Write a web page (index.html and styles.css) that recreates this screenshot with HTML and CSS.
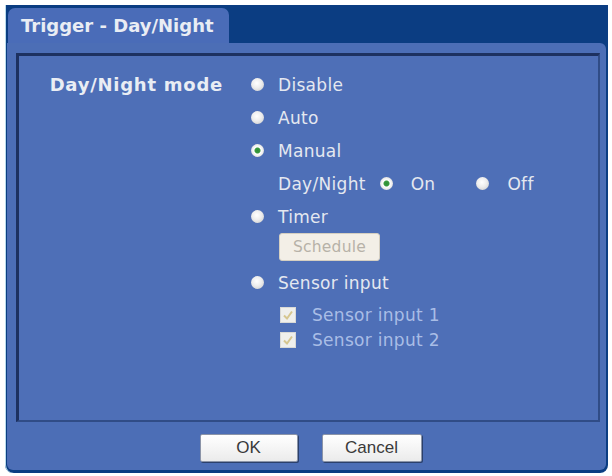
FILE: index.html
```html
<!DOCTYPE html>
<html lang="en">
<head>
    <meta charset="UTF-8">
    <meta name="viewport" content="width=device-width, initial-scale=1.0">
    <title>Trigger - Day/Night</title>
    <link rel="stylesheet" href="styles.css">
</head>
<body>
    <div class="dialog">
        <div class="dialog-head">
            <div class="tab">Trigger - Day/Night</div>
        </div>

        <div class="dialog-body">
            <div class="panel">
                <div class="field">
                    <div class="field-label">Day/Night mode</div>
                    <div class="options">
                        <label class="option"><span class="radio"></span>Disable</label>
                        <label class="option"><span class="radio"></span>Auto</label>
                        <label class="option"><span class="radio checked"></span>Manual</label>

                        <!-- manual switch -->
                        <div class="sub-row">
                            <span>Day/Night</span>
                            <span class="radio checked on-radio"></span>
                            <span class="sub-text">On</span>
                            <span class="radio off-radio"></span>
                            <span class="sub-text">Off</span>
                        </div>

                        <label class="option"><span class="radio"></span>Timer</label>
                        <div class="indent">
                            <button class="btn-small" disabled>Schedule</button>
                        </div>

                        <label class="option"><span class="radio"></span>Sensor input</label>
                        <div class="checks">
                            <label class="check">
                                <span class="box"><svg width="12" height="12" viewBox="0 0 12 12"><polyline points="2,6.5 5,9.5 10,2.5" fill="none" stroke="#d6c68f" stroke-width="2"/></svg></span>
                                Sensor input 1
                            </label>
                            <label class="check">
                                <span class="box"><svg width="12" height="12" viewBox="0 0 12 12"><polyline points="2,6.5 5,9.5 10,2.5" fill="none" stroke="#d6c68f" stroke-width="2"/></svg></span>
                                Sensor input 2
                            </label>
                        </div>
                    </div>
                </div>
            </div>

            <div class="actions">
                <button class="btn">OK</button>
                <button class="btn btn-wide">Cancel</button>
            </div>
        </div>
    </div>
</body>
</html>
```

FILE: styles.css
```css
/* Trigger dialog */
body {
    margin: 0;
    background: #ffffff;
    font-family: "DejaVu Sans", Verdana, sans-serif;
}

.dialog {
    margin: 5px 4px 0 5px;
    height: 468px;
    box-sizing: border-box;
    padding: 0 2px 3px 2px;
    display: flex;
    flex-direction: column;
    background: #0b3d82; /* dark frame */
    border-radius: 0 0 8px 8px;
    box-shadow: inset 1px 0 0 #b9dcec;
}

.dialog-head {
    height: 38px;
    box-sizing: border-box;
    padding: 3px 0 0 1px;
}

.tab {
    width: 221px;
    height: 35px;
    box-sizing: border-box;
    padding: 1px 0 0 13px;
    line-height: 33px;
    background: #4a6cb8;
    border-radius: 7px 7px 0 0;
    color: #e9edf4;
    font-size: 18px;
    font-weight: bold;
}

.dialog-body {
    flex: 1;
    display: flex;
    flex-direction: column;
    padding: 10px 6px 0 9px;
    background: #4c6eb6;
    border-radius: 0 6px 6px 6px;
}

.panel {
    height: 369px;
    box-sizing: border-box;
    padding-top: 12px;
    background: #4e6fb7;
    border: 2px solid #304c86;
    border-top: 3px solid #1d3160;
    border-left: 3px solid #1d3160;
}

.field {
    display: flex;
}

.field-label {
    width: 204px;
    text-align: right;
    line-height: 33px;
    color: #e9edf4;
    font-size: 18px;
    font-weight: bold;
    letter-spacing: 0.75px;
}

.options {
    margin-left: 28px;
    color: #e4e8f0;
    font-size: 17px;
    letter-spacing: 0.3px;
}

.option {
    display: flex;
    align-items: center;
    gap: 14px;
    height: 33px;
}

.radio {
    flex: none;
    width: 13px;
    height: 13px;
    border-radius: 50%;
    background: radial-gradient(circle at 45% 40%, #ffffff 0, #ededed 45%, #c6c6c6 100%);
}

.radio.checked {
    background: radial-gradient(circle, #2e8f36 0, #3a9a3f 2.5px, #ffffff 3.5px, #ececec 60%, #bbbbbb 100%);
}

.sub-row {
    display: flex;
    align-items: center;
    height: 33px;
    padding-left: 27px;
}

.on-radio {
    margin-left: 14px;
}

.off-radio {
    margin-left: 41px;
}

.sub-text {
    margin-left: 18px;
}

.indent {
    padding-left: 28px;
    margin-bottom: 5px;
}

.btn-small {
    display: block;
    width: 101px;
    height: 28px;
    padding: 0;
    background: #f3efe7;
    border: 1px solid #d5cfc1;
    border-radius: 3px;
    color: #b7b2a8;
    font-family: "DejaVu Sans", Verdana, sans-serif;
    font-size: 15.5px;
    letter-spacing: 0.2px;
}

.checks {
    padding-left: 29px;
    margin-top: 3px;
}

.check {
    display: flex;
    align-items: center;
    gap: 16px;
    height: 25px;
    color: #a9bde6;
}

.box {
    flex: none;
    width: 16px;
    height: 16px;
    box-sizing: border-box;
    display: grid;
    place-items: center;
    background: #efefec;
    border: 1px solid #d9d9d6;
}

.actions {
    flex: 1;
    display: flex;
    justify-content: center;
    align-items: center;
    gap: 24px;
    padding: 4px 0 0 5px;
}

.btn {
    width: 98px;
    height: 28px;
    padding: 0;
    background: linear-gradient(#ffffff, #ebebeb);
    border: 1px solid #8b94a8;
    border-radius: 2px;
    box-shadow: 1px 1px 0 #2b406b;
    color: #3a3a3a;
    font-family: "Liberation Sans", Arial, sans-serif;
    font-size: 17px;
}

.btn-wide {
    width: 100px;
}
```
